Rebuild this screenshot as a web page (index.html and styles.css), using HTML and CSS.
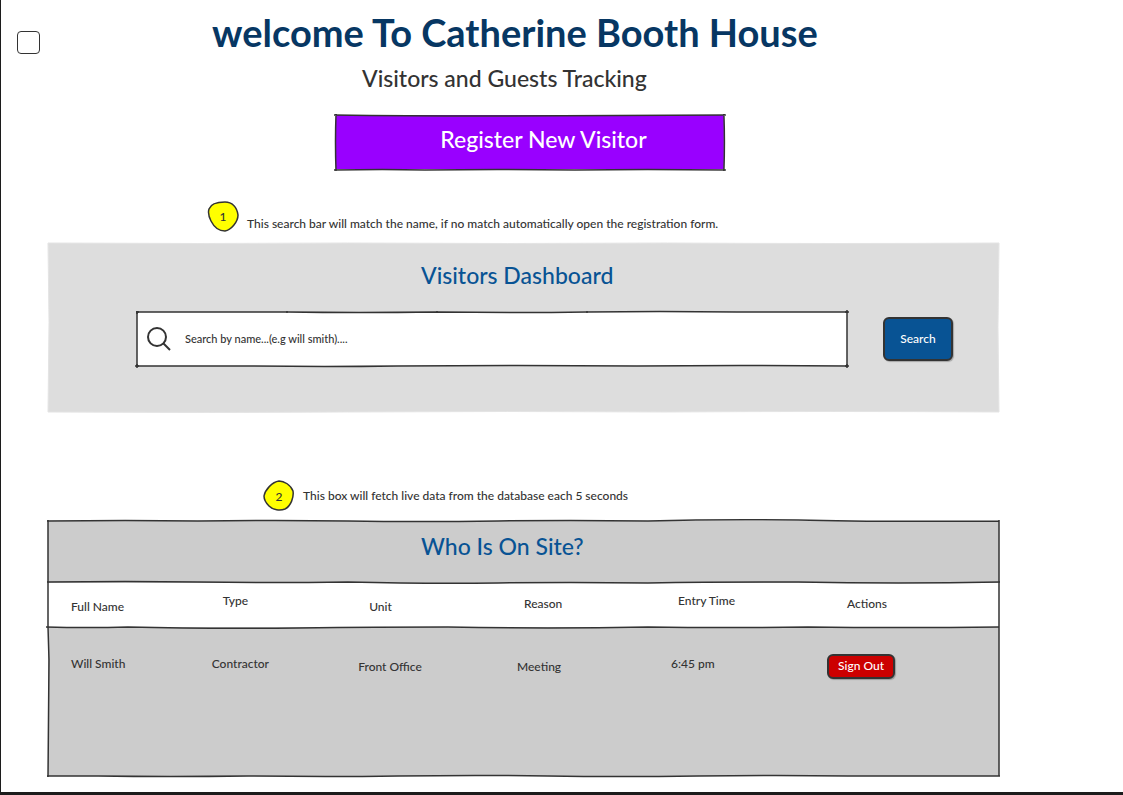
FILE: index.html
```html
<!DOCTYPE html>
<html lang="en">
<head>
<meta charset="utf-8">
<meta name="viewport" content="width=device-width, initial-scale=1">
<title>Catherine Booth House</title>
<link rel="stylesheet" href="styles.css">
</head>
<body>
<div class="page">
  <aside class="rail"><input class="check" type="checkbox" aria-label="Select page"></aside>
  <main class="main">
    <header class="header">
      <h1 class="title">welcome To Catherine Booth House</h1>
      <p class="subtitle">Visitors and Guests Tracking</p>
      <button class="register" type="button">
        <svg class="frame" viewBox="0 0 390 55" preserveAspectRatio="none" aria-hidden="true">
          <path class="fill-purple" d="M1 1H389V55H1Z"/>
          <path class="ink" d="M-1 1Q70 2 150 2Q270 1 391 1M1 0Q0 28 1 57M389 0Q390 28 389 57M-1 56Q50 55 90 56Q160 55 240 56Q310 55 391 56"/>
        </svg>
        <span class="register-label">Register New Visitor</span>
      </button>
    </header>

    <p class="note note-search">
      <span class="badge">
        <svg class="blob" viewBox="0 0 32 32" aria-hidden="true"><path d="M2 9C4 3 12 2 18 2C25 2 30 7 31 15C31 22 24 30 18 31C12 31 7 27 4 21C2 17 1 12 2 9Z"/></svg>
        <span class="badge-text">1</span>
      </span>
      <span class="note-text note-text-low">This search bar will match the name, if no match automatically open the registration form.</span>
    </p>

    <section class="dashboard">
      <svg class="frame" viewBox="0 0 952 170" preserveAspectRatio="none" aria-hidden="true">
        <path class="panel-light" d="M0 0Q150 1 300 0Q460 1 620 0Q790 1 952 0L951 85L952 170Q780 169 620 170Q460 169 300 170Q150 171 0 170L1 80Z"/>
      </svg>
      <h2 class="heading">Visitors Dashboard</h2>
      <form class="search">
        <label class="field">
          <svg class="frame" viewBox="0 0 710 55" preserveAspectRatio="none" aria-hidden="true">
            <path class="fill-white ink" d="M0 1L150 1Q220 2 300 1Q380 2 450 1Q520 0 600 1L710 1L710 55Q600 54 500 55Q380 54 260 55Q190 56 110 55L0 55Z"/>
            <path class="ink" d="M-1 1H2M0 0V3M708 1H712M710-1V2M-2 55H2M0 53V57M708 55H712M710 53V57M150 0V2M300 0V2M450 0V2"/>
          </svg>
          <svg class="lens" viewBox="0 0 24 24" aria-hidden="true"><circle cx="10" cy="10" r="9"/><path d="M16 16L23 23"/></svg>
          <input class="field-input" type="text" aria-label="Search by name" placeholder="Search by name...(e.g will smith)....">
        </label>
        <button class="button button-search" type="button">Search</button>
      </form>
    </section>

    <p class="note note-live">
      <span class="badge">
        <svg class="blob" viewBox="0 0 32 32" aria-hidden="true"><path d="M1 16C2 10 9 2 16 1C21 1 28 5 30 11C31 17 28 26 22 29C17 31 10 30 6 26C3 23 1 20 1 16Z"/></svg>
        <span class="badge-text">2</span>
      </span>
      <span class="note-text">This box will fetch live data from the database each 5 seconds</span>
    </p>

    <section class="onsite">
      <svg class="frame" viewBox="0 0 951 256" preserveAspectRatio="none" aria-hidden="true">
        <path class="fill-grey" d="M0 1H951V256H0Z"/>
        <path class="fill-white" d="M0 63H951V107H0Z"/>
        <path class="ink" d="M-1 1Q80 0 150 1Q230 0 300 1Q370 2 450 1Q520 0 600 1Q670-1 750 0Q820 2 951 1M0 0V107L1 140L0 257M951 0V256M-1 256H50Q120 257 200 256Q280 257 350 256Q430 255 500 256Q570 257 650 256Q730 255 800 256H952"/>
        <path class="ink" d="M-1 62Q80 61 150 62Q220 63 300 62Q380 64 450 63Q520 62 600 63Q670 62 750 62Q850 64 952 62M-2 107Q40 108 80 107Q160 109 250 108Q330 107 400 107Q500 109 600 107Q680 108 760 107Q850 108 951 107"/>
      </svg>
      <h2 class="heading heading-onsite">Who Is On Site?</h2>
      <table class="visitors">
        <colgroup><col class="col-name"><col class="col-type"><col class="col-unit"><col class="col-reason"><col class="col-time"><col class="col-actions"></colgroup>
        <thead>
          <tr class="head-row">
            <th class="low" scope="col">Full Name</th>
            <th class="high inset" scope="col">Type</th>
            <th class="low inset" scope="col">Unit</th>
            <th class="mid inset-small" scope="col">Reason</th>
            <th class="high inset-small" scope="col">Entry Time</th>
            <th class="mid inset-wide" scope="col">Actions</th>
          </tr>
        </thead>
        <tbody>
          <tr class="body-row">
            <td class="high">Will Smith</td>
            <td class="high">Contractor</td>
            <td class="low">Front Office</td>
            <td class="low">Meeting</td>
            <td class="high">6:45 pm</td>
            <td class="action"><button class="button button-out" type="button">Sign Out</button></td>
          </tr>
        </tbody>
      </table>
    </section>
  </main>
</div>
</body>
</html>
```
FILE: styles.css
```css
* { box-sizing: border-box; }

body {
  margin: 0;
  background: #fff;
  color: #333;
  font-family: Lato, "Open Sans", sans-serif;
  font-size: 12px;
  font-weight: 500;
}

button, input { font: inherit; }

.page {
  display: flex;
  min-height: 100vh;
  border-left: 1px solid #1c1c1c;
  border-bottom: 3px solid #1c1c1c;
}

.rail { width: 47px; padding: 31px 0 0 16px; }

.check {
  appearance: none;
  display: block;
  width: 23px;
  height: 23px;
  margin: 0;
  border: 1px solid #333;
  border-radius: 4px;
  background: #fff;
}
.check:checked { background: #085394; }

.main { flex: 1; padding: 8px 124px 16px 0; }

.header { display: flex; flex-direction: column; align-items: flex-start; }

.title {
  margin: 0 0 0 164px;
  color: #073763;
  font-size: 38px;
  font-weight: 700;
  line-height: 48px;
}

.subtitle {
  margin: 6px 0 20px 314px;
  font-size: 23px;
  line-height: 32px;
}

/* Hand-drawn outline laid behind a box */
.frame {
  position: absolute;
  inset: 0;
  z-index: -1;
  width: 100%;
  height: 100%;
  overflow: visible;
}
.ink { stroke: #333; stroke-width: 1.5; }
.ink:not(.fill-white) { fill: none; }
.fill-purple { fill: #9900ff; }
.fill-white { fill: #fff; }
.fill-grey { fill: #ccc; }
.panel-light { fill: #ddd; stroke: #e4e4e4; }

.register, .dashboard, .field, .onsite { position: relative; z-index: 0; }

.register {
  width: 41%;
  height: 55px;
  margin-left: 287px;
  padding: 0 0 5px 27px;
  border: 0;
  background: none;
  color: #fff;
  font-size: 23px;
}

.note { display: flex; align-items: center; gap: 8px; margin: 0; }
.note-search { padding: 31px 0 11px 159px; }
.note-live { padding: 68px 0 8px 215px; }
.note-text { line-height: 16px; }
.note-text-low { padding-top: 16px; }

.badge { display: grid; place-items: center; width: 32px; height: 32px; }
.blob { grid-area: 1 / 1; width: 32px; height: 32px; fill: #ff0; stroke: #333; stroke-width: 1.5; }
.badge-text { grid-area: 1 / 1; z-index: 1; }

.dashboard { padding: 16px 46px 46px 89px; }

.heading {
  margin: 0 0 20px 284px;
  color: #085394;
  font-size: 23px;
  font-weight: 500;
  line-height: 32px;
}

.search { display: flex; align-items: center; gap: 36px; }

.field {
  display: flex;
  flex: 1;
  align-items: center;
  gap: 14px;
  height: 55px;
  padding: 0 10px;
}
.lens { width: 24px; height: 24px; fill: none; stroke: #333; stroke-width: 2; }
.field-input {
  flex: 1;
  min-width: 0;
  padding: 0;
  border: 0;
  background: none;
  color: #333;
  font-size: 11px;
}
.field-input::placeholder { color: #333; opacity: 1; }

.button {
  padding: 0;
  border: 2px solid #333;
  border-radius: 6px;
  color: #fff;
  box-shadow: 1px 1px 1px rgba(0, 0, 0, 0.25);
}
.button-search { width: 70px; height: 44px; background: #085394; }
.button-out { display: block; width: 68px; height: 25px; background: #c00; }

.onsite { min-height: 256px; }
.heading-onsite { margin: 0 0 0 373px; padding: 10px 0 20px; }

.visitors { width: 100%; border-collapse: collapse; table-layout: fixed; }
.visitors th, .visitors td {
  padding: 0 0 0 23px;
  font-weight: 500;
  line-height: 16px;
  text-align: left;
}
.visitors th { height: 45px; padding-top: 11px; padding-bottom: 12px; }
.visitors td { height: 72px; padding-top: 29px; padding-bottom: 24px; }
.visitors .high { vertical-align: top; }
.visitors .mid { vertical-align: middle; }
.visitors .low { vertical-align: bottom; }
.visitors .inset-small { padding-left: 30px; }
.visitors .inset { padding-left: 34px; }
.visitors .inset-wide { padding-left: 43px; }
.visitors .action { padding-top: 26px; padding-bottom: 20px; }
.col-name { width: 14.8%; }
.col-type { width: 15.4%; }
.col-unit { width: 16.7%; }
.col-reason { width: 16.2%; }
.col-time { width: 16.4%; }
.col-actions { width: 20.5%; }
```
